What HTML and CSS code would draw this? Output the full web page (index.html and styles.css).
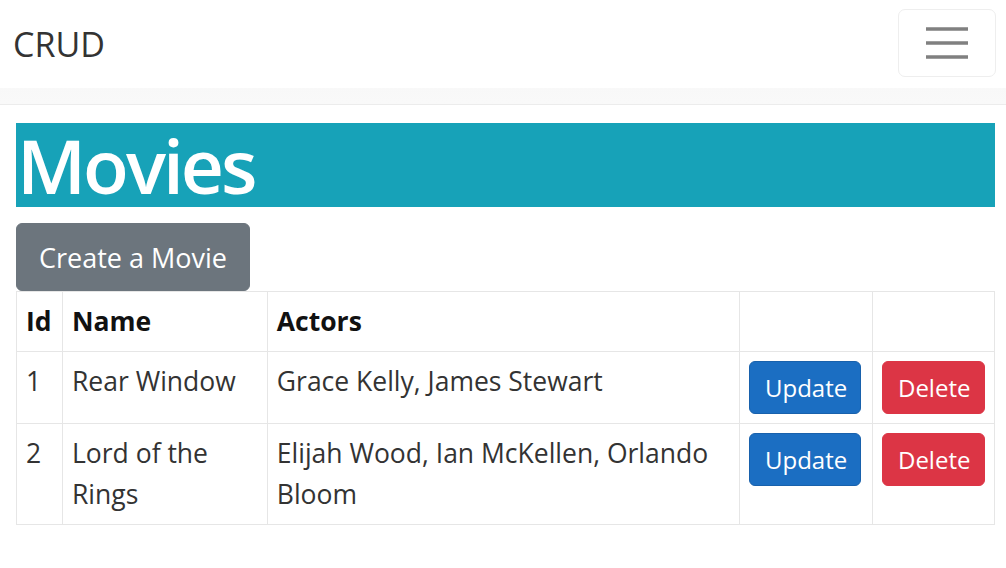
FILE: index.html
```html
<!DOCTYPE html>
<html lang="en">
<head>
  <meta charset="UTF-8">
  <meta name="viewport" content="width=device-width, initial-scale=1.0">
  <title>Movies - CRUD</title>
  <link rel="stylesheet" href="styles.css">
</head>
<body>
  <header class="site-header">
    <nav class="navbar">
      <a class="navbar-brand" href="#">CRUD</a>
      <button class="navbar-toggler" type="button" aria-label="Toggle navigation">
        <svg width="42" height="34" viewBox="0 0 42 34">
          <path d="M0 3h42M0 17h42M0 31h42" stroke="#808080" stroke-width="3.5"/>
        </svg>
      </button>
    </nav>
  </header>

  <main class="container">
    <h1 class="page-title">Movies</h1>
    <button class="btn btn-secondary">Create a Movie</button>

    <table class="table">
      <thead>
        <tr>
          <th class="col-id">Id</th>
          <th class="col-name">Name</th>
          <th class="col-actors">Actors</th>
          <th class="col-update"></th>
          <th class="col-delete"></th>
        </tr>
      </thead>
      <tbody>
        <tr>
          <td>1</td>
          <td>Rear Window</td>
          <td>Grace Kelly, James Stewart</td>
          <td><button class="btn btn-primary">Update</button></td>
          <td><button class="btn btn-danger">Delete</button></td>
        </tr>
        <tr>
          <td>2</td>
          <td>Lord of the Rings</td>
          <td>Elijah Wood, Ian McKellen, Orlando Bloom</td>
          <td><button class="btn btn-primary">Update</button></td>
          <td><button class="btn btn-danger">Delete</button></td>
        </tr>
      </tbody>
    </table>
  </main>
</body>
</html>
```

FILE: styles.css
```css
* {
  box-sizing: border-box;
}

body {
  margin: 0;
  font-family: "Open Sans", "Noto Sans", sans-serif;
  font-size: 26.5px;
  line-height: 41px;
  color: #212529;
  background: #fff;
}

.site-header {
  background: linear-gradient(#f3f3f3, #f9f9f9);
  padding-bottom: 16px;
  border-bottom: 1px solid #ececec;
  margin-bottom: 18px;
}

.navbar {
  height: 88px;
  display: flex;
  align-items: center;
  justify-content: space-between;
  padding: 0 10px 0 13px;
  background: #fff;
}

.navbar-brand {
  font-size: 34px;
  color: #333;
  text-decoration: none;
}

.navbar-toggler {
  width: 98px;
  height: 68px;
  margin-top: -2px;
  background: transparent;
  border: 1px solid #eeeeee;
  border-radius: 7px;
  display: flex;
  align-items: center;
  justify-content: center;
  padding: 0;
}

.container {
  padding: 0 11px 0 16px;
}

.page-title {
  margin: 0 0 16px;
  height: 84px;
  background: #17a2b8;
  color: #fff;
  font-size: 75px;
  font-weight: 600;
  line-height: 84px;
  padding-left: 1px;
  letter-spacing: -3px;
}

.btn {
  font-family: inherit;
  border: 1px solid transparent;
  border-radius: 6px;
  color: #fff;
  cursor: pointer;
}

.btn-secondary {
  width: 234px;
  height: 68px;
  font-size: 27px;
  background: #6c757d;
  border-color: #6c757d;
  padding: 0;
}

.btn-primary,
.btn-danger {
  height: 53px;
  font-size: 24px;
  padding: 0 15px;
}

.btn-primary {
  width: 112px;
  background: #1b6ec2;
  border-color: #1861ac;
}

.btn-danger {
  width: 103px;
  background: #dc3545;
  border-color: #dc3545;
}

.table {
  width: 979px;
  border-collapse: collapse;
  border: 1px solid #e6e6e6;
  color: #333;
}

.table th,
.table td {
  border: 1px solid #e6e6e6;
  padding: 9px 9px;
  text-align: left;
  vertical-align: top;
}

.table th {
  font-weight: 700;
  color: #111;
}

.col-id { width: 46px; }
.col-name { width: 205px; }
.col-actors { width: 473px; }
.col-update { width: 133px; }
.col-delete { width: 122px; }
```
